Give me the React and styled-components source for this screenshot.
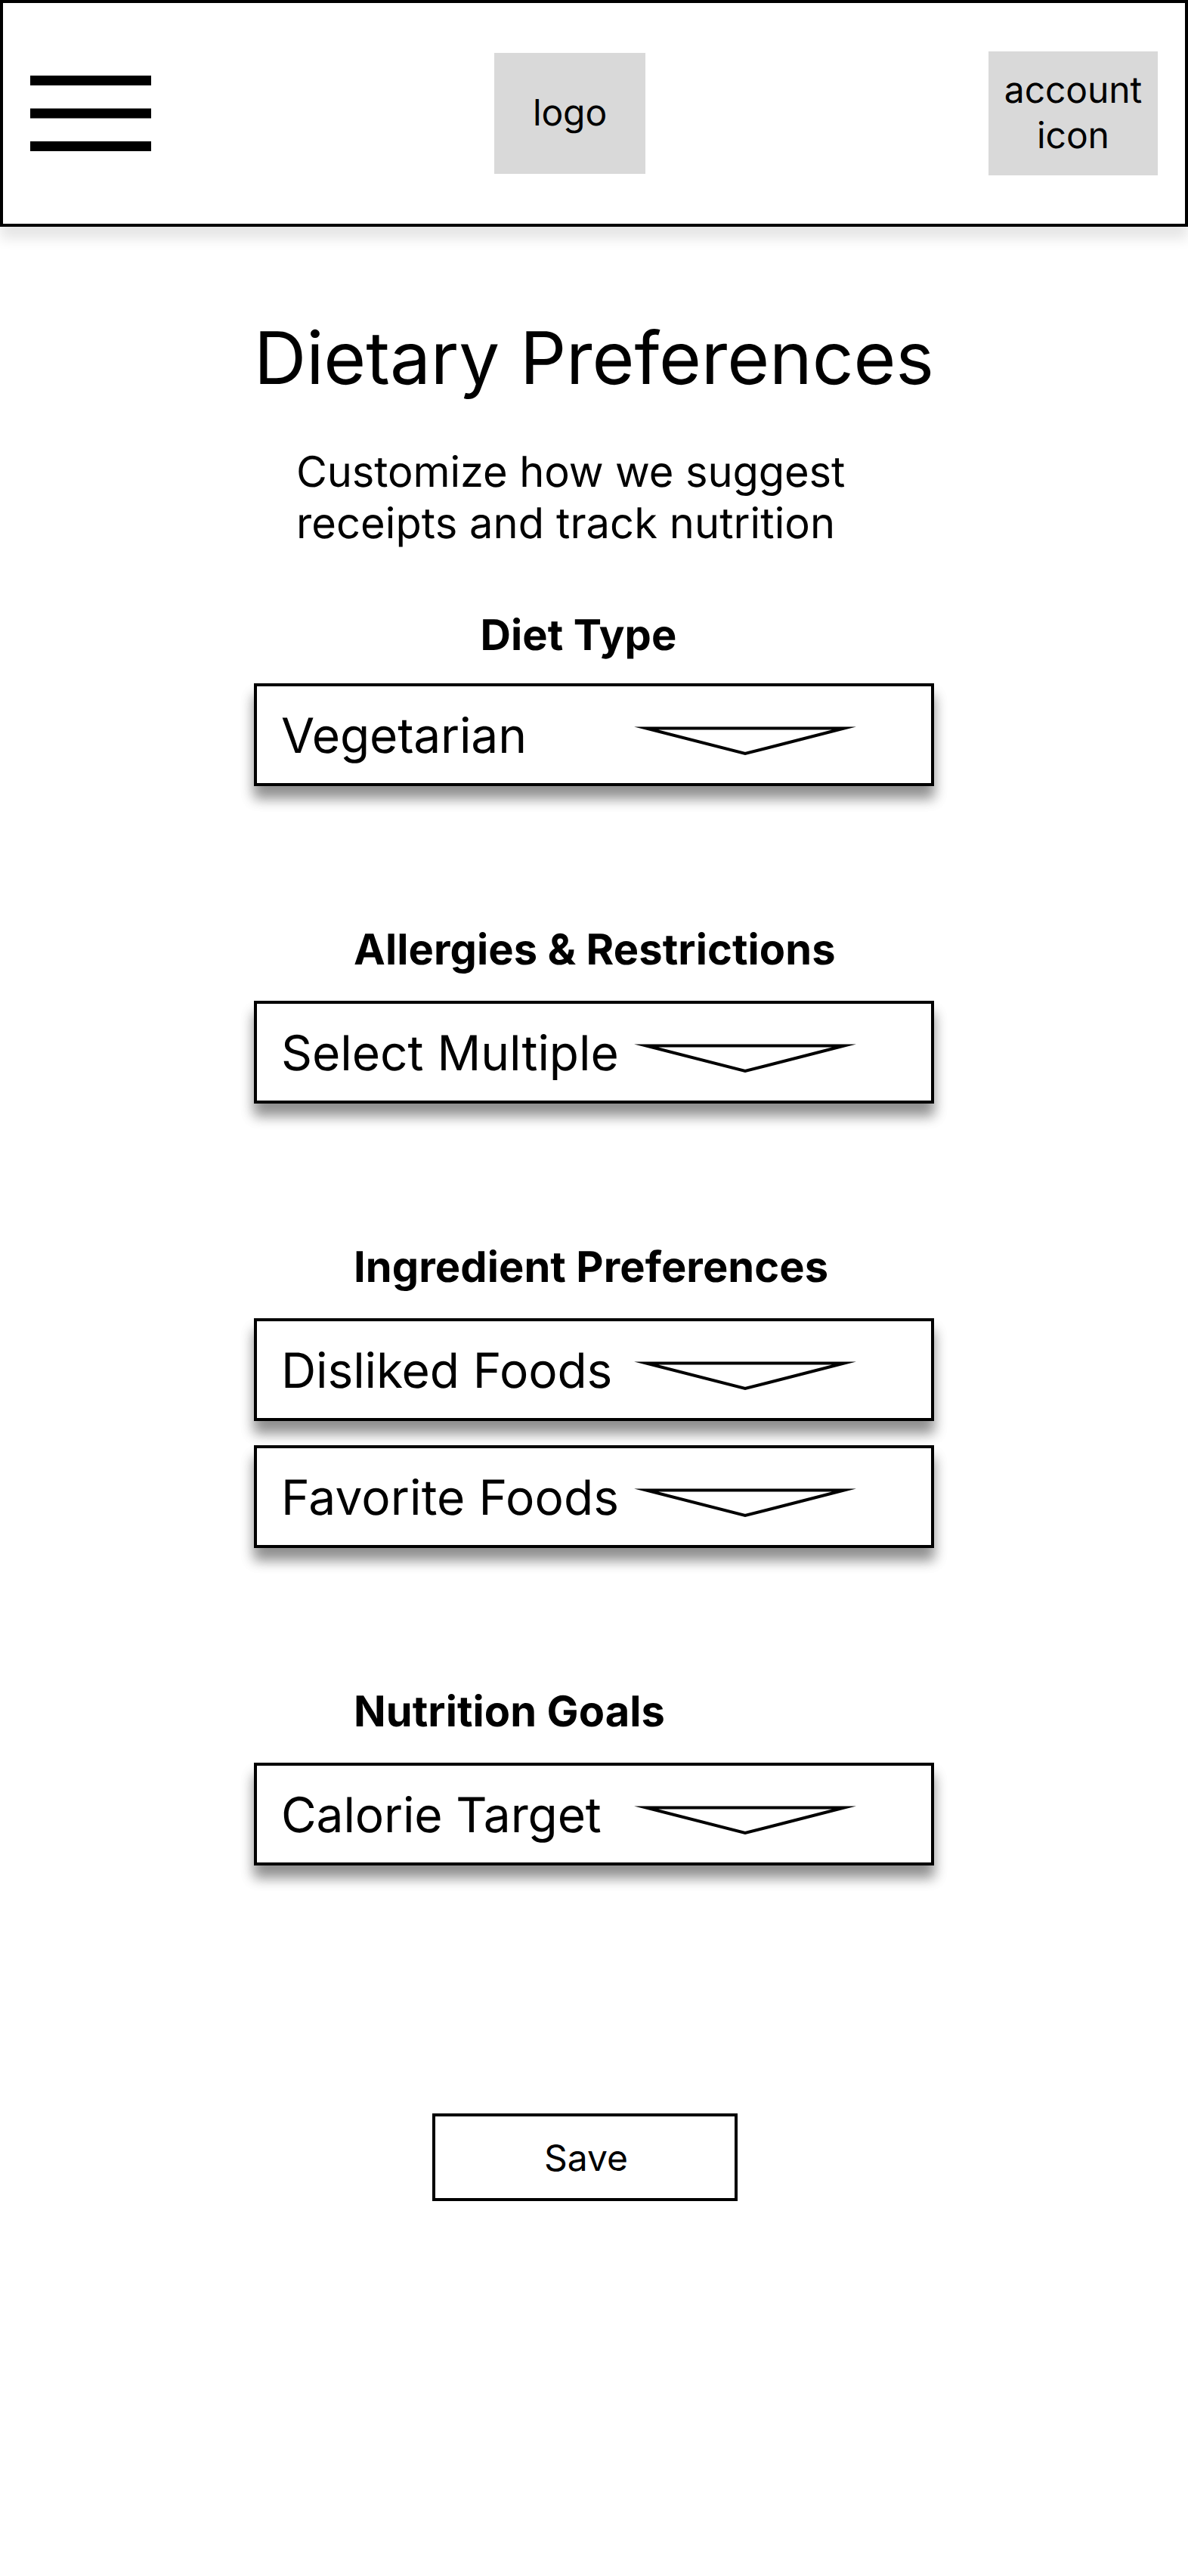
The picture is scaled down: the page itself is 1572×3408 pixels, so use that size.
import React from "react";
import styled, { createGlobalStyle } from "styled-components";

const GlobalStyle = createGlobalStyle`
  * { box-sizing: border-box; }
  body {
    margin: 0;
    background: #fff;
    color: #000;
    font-family: Inter, "Liberation Sans", sans-serif;
    text-rendering: geometricPrecision;
  }
`;

const Page = styled.div`
  min-height: 3408px;
  background: #fff;
`;

const Header = styled.header`
  display: flex;
  align-items: center;
  justify-content: space-between;
  height: 300px;
  padding: 0 36px;
  border: 4px solid #000;
  background: #fff;
  box-shadow: 0 16px 16px rgba(0, 0, 0, 0.1);
`;

const MenuIcon = styled.svg`
  display: block;
  width: 160px;
  height: 100px;
`;

const Placeholder = styled.div`
  display: flex;
  align-items: center;
  justify-content: center;
  width: ${(p) => p.$width}px;
  height: ${(p) => p.$height}px;
  padding-bottom: 2px;
  background: #d9d9d9;
  font-size: 48px;
  line-height: 60px;
  letter-spacing: -0.1px;
  text-align: center;
`;

const Main = styled.main`
  display: flex;
  flex-direction: column;
  width: 900px;
  margin: 0 auto;
  padding-top: 116px;
`;

const Title = styled.h1`
  margin: 0;
  font-size: 96px;
  font-weight: 400;
  line-height: 116px;
  letter-spacing: -0.12px;
  white-space: nowrap;
`;

const Intro = styled.p`
  margin: 58px 0 0 56px;
  font-size: 56px;
  line-height: 68px;
  white-space: nowrap;
`;

const Line = styled.span`
  display: block;
  letter-spacing: ${(p) => p.$tracking}px;
`;

const Section = styled.section`
  display: flex;
  flex-direction: column;
  margin-top: ${(p) => p.$top}px;
`;

const Heading = styled.h2`
  margin: 0 0 ${(p) => p.$gap}px ${(p) => p.$indent}px;
  font-size: 56px;
  font-weight: 700;
  line-height: 68px;
  letter-spacing: 0.1px;
  white-space: nowrap;
`;

const SelectList = styled.div`
  display: flex;
  flex-direction: column;
  gap: 32px;
`;

const SelectBox = styled.div`
  display: flex;
  align-items: center;
  justify-content: space-between;
  height: 136px;
  padding: 0 98px 0 32px;
  border: 4px solid #000;
  background: #fff;
  box-shadow: 0 16px 16px rgba(0, 0, 0, 0.25), 0 16px 16px rgba(0, 0, 0, 0.25);
`;

const SelectValue = styled.span`
  padding-top: 4px;
  font-size: 64px;
  line-height: 76px;
  letter-spacing: ${(p) => p.$tracking}px;
  white-space: nowrap;
`;

const Arrow = styled.svg`
  display: block;
  flex: none;
  width: 296px;
  height: 48px;
  margin-top: 16px;
`;

const SaveButton = styled.button`
  width: 404px;
  height: 116px;
  margin: 328px 0 0 236px;
  padding: 2px 0 0 3px;
  border: 4px solid #000;
  border-radius: 0;
  background: #fff;
  color: #000;
  font: inherit;
  font-size: 48px;
  line-height: 60px;
`;

function Select({ label, tracking }) {
  return (
    <SelectBox>
      <SelectValue $tracking={tracking}>{label}</SelectValue>
      <Arrow viewBox="0 0 296 48" fill="none">
        <path
          d="M17 7.5H279L148 41Z"
          stroke="#000"
          strokeWidth="4"
          strokeLinejoin="miter"
          strokeMiterlimit="20"
        />
      </Arrow>
    </SelectBox>
  );
}

const sections = [
  {
    title: "Diet Type",
    indent: 299.5,
    top: 80,
    gap: 30,
    options: [{ label: "Vegetarian", tracking: -0.15 }],
  },
  {
    title: "Allergies & Restrictions",
    indent: 132,
    top: 182,
    gap: 34,
    options: [{ label: "Select Multiple", tracking: -0.03 }],
  },
  {
    title: "Ingredient Preferences",
    indent: 132,
    top: 182,
    gap: 34,
    options: [
      { label: "Disliked Foods", tracking: -0.1 },
      { label: "Favorite Foods", tracking: 0.12 },
    ],
  },
  {
    title: "Nutrition Goals",
    indent: 132,
    top: 182,
    gap: 34,
    options: [{ label: "Calorie Target", tracking: -0.14 }],
  },
];

export default function App() {
  return (
    <Page>
      <GlobalStyle />
      <Header>
        <MenuIcon viewBox="0 0 160 100">
          <path d="M0 0H160V13H0ZM0 43.5H160V56.5H0ZM0 87H160V100H0Z" fill="#000" />
        </MenuIcon>
        <Placeholder $width={200} $height={160}>logo</Placeholder>
        <Placeholder $width={224} $height={164}>
          account
          <br />
          icon
        </Placeholder>
      </Header>
      <Main>
        <Title>Dietary Preferences</Title>
        <Intro>
          <Line $tracking={-0.09}>Customize how we suggest</Line>
          <Line $tracking={0.08}>receipts and track nutrition</Line>
        </Intro>
        {sections.map((s) => (
          <Section key={s.title} $top={s.top}>
            <Heading $indent={s.indent} $gap={s.gap}>{s.title}</Heading>
            <SelectList>
              {s.options.map((o) => (
                <Select key={o.label} label={o.label} tracking={o.tracking} />
              ))}
            </SelectList>
          </Section>
        ))}
        <SaveButton>Save</SaveButton>
      </Main>
    </Page>
  );
}
